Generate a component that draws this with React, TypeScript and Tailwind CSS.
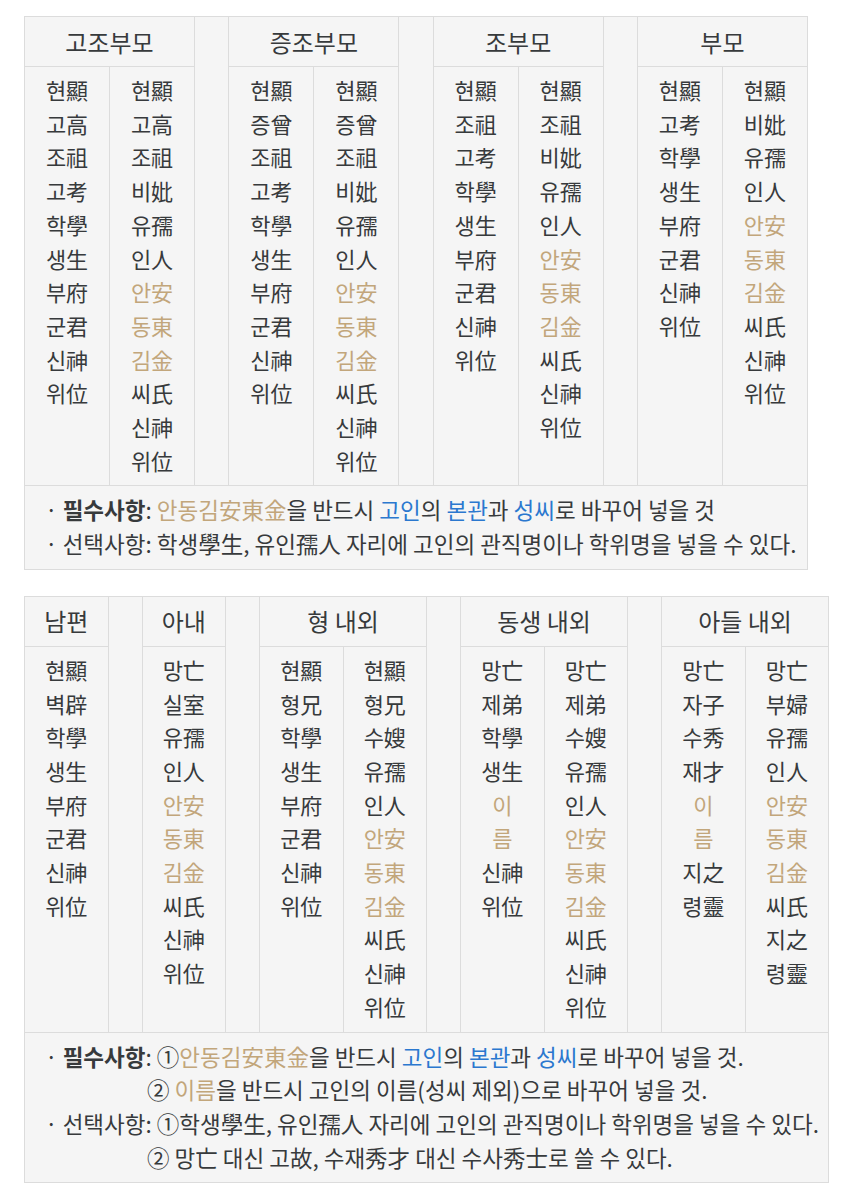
import React from "react";

const GOLD = "text-[#c2a67b]";
const BLUE = "text-[#2b78cf]";

type Group = { title: string; cols: string[][] };

// "*" 로 시작하는 항목은 금색(바꿔 넣을 자리)
const t1: Group[] = [
  {
    title: "고조부모",
    cols: [
      ["현顯", "고高", "조祖", "고考", "학學", "생生", "부府", "군君", "신神", "위位"],
      ["현顯", "고高", "조祖", "비妣", "유孺", "인人", "*안安", "*동東", "*김金", "씨氏", "신神", "위位"],
    ],
  },
  {
    title: "증조부모",
    cols: [
      ["현顯", "증曾", "조祖", "고考", "학學", "생生", "부府", "군君", "신神", "위位"],
      ["현顯", "증曾", "조祖", "비妣", "유孺", "인人", "*안安", "*동東", "*김金", "씨氏", "신神", "위位"],
    ],
  },
  {
    title: "조부모",
    cols: [
      ["현顯", "조祖", "고考", "학學", "생生", "부府", "군君", "신神", "위位"],
      ["현顯", "조祖", "비妣", "유孺", "인人", "*안安", "*동東", "*김金", "씨氏", "신神", "위位"],
    ],
  },
  {
    title: "부모",
    cols: [
      ["현顯", "고考", "학學", "생生", "부府", "군君", "신神", "위位"],
      ["현顯", "비妣", "유孺", "인人", "*안安", "*동東", "*김金", "씨氏", "신神", "위位"],
    ],
  },
];

const t2: Group[] = [
  { title: "남편", cols: [["현顯", "벽辟", "학學", "생生", "부府", "군君", "신神", "위位"]] },
  { title: "아내", cols: [["망亡", "실室", "유孺", "인人", "*안安", "*동東", "*김金", "씨氏", "신神", "위位"]] },
  {
    title: "형 내외",
    cols: [
      ["현顯", "형兄", "학學", "생生", "부府", "군君", "신神", "위位"],
      ["현顯", "형兄", "수嫂", "유孺", "인人", "*안安", "*동東", "*김金", "씨氏", "신神", "위位"],
    ],
  },
  {
    title: "동생 내외",
    cols: [
      ["망亡", "제弟", "학學", "생生", "*이", "*름", "신神", "위位"],
      ["망亡", "제弟", "수嫂", "유孺", "인人", "*안安", "*동東", "*김金", "씨氏", "신神", "위位"],
    ],
  },
  {
    title: "아들 내외",
    cols: [
      ["망亡", "자子", "수秀", "재才", "*이", "*름", "지之", "령靈"],
      ["망亡", "부婦", "유孺", "인人", "*안安", "*동東", "*김金", "씨氏", "지之", "령靈"],
    ],
  },
];

function Column({ items }: { items: string[] }) {
  return (
    <td className="border border-[#dcdcdc] align-top text-center pt-[6px] pb-[8px]">
      {items.map((w, i) =>
        w.startsWith("*") ? (
          <div key={i} className={GOLD}>
            {w.slice(1)}
          </div>
        ) : (
          <div key={i}>{w}</div>
        )
      )}
    </td>
  );
}

function JesaTable({
  groups,
  colW,
  gapW,
  width,
  notes,
}: {
  groups: Group[];
  colW: number;
  gapW: number;
  width: string;
  notes: React.ReactNode;
}) {
  const total = groups.reduce((s, g) => s + g.cols.length, 0) + groups.length - 1;
  return (
    <table className={`${width} table-fixed border-collapse bg-[#f5f5f5] text-[#373a3c] text-[22px] leading-[33.7px]`}>
      <colgroup>
        {groups.map((g, gi) => (
          <React.Fragment key={gi}>
            {gi > 0 && <col style={{ width: gapW }} />}
            {g.cols.map((_, ci) => (
              <col key={ci} style={{ width: colW }} />
            ))}
          </React.Fragment>
        ))}
      </colgroup>
      <tbody>
        <tr className="h-[50px]">
          {groups.map((g, gi) => (
            <React.Fragment key={gi}>
              {gi > 0 && <td rowSpan={2} className="border border-[#dcdcdc]" />}
              <td colSpan={g.cols.length} className="border border-[#dcdcdc] text-center text-[24px]">
                {g.title}
              </td>
            </React.Fragment>
          ))}
        </tr>
        <tr>
          {groups.map((g, gi) => (
            <React.Fragment key={gi}>
              {g.cols.map((c, ci) => (
                <Column key={ci} items={c} />
              ))}
            </React.Fragment>
          ))}
        </tr>
        <tr>
          <td colSpan={total} className="border border-[#dcdcdc] pl-[20px] pt-[7px] pb-[8px] text-[22.5px] whitespace-nowrap">
            {notes}
          </td>
        </tr>
      </tbody>
    </table>
  );
}

export default function App() {
  return (
    <div
      className="min-h-[1198px] bg-white pt-[16px] pl-[24px] flex flex-col gap-[26px]"
      style={{ fontFamily: '"Malgun Gothic", "Noto Sans CJK KR", sans-serif' }}
    >
      {/* 고조부모 ~ 부모 */}
      <JesaTable
        groups={t1}
        colW={85}
        gapW={34.3}
        width="w-[783px]"
        notes={
          <>
            <div>
              · <b>필수사항</b>: <span className={GOLD}>안동김安東金</span>을 반드시{" "}
              <span className={BLUE}>고인</span>의 <span className={BLUE}>본관</span>과{" "}
              <span className={BLUE}>성씨</span>로 바꾸어 넣을 것
            </div>
            <div>· 선택사항: 학생學生, 유인孺人 자리에 고인의 관직명이나 학위명을 넣을 수 있다.</div>
          </>
        }
      />

      {/* 남편 ~ 아들 내외 */}
      <JesaTable
        groups={t2}
        colW={83.5}
        gapW={34}
        width="w-[804px]"
        notes={
          <>
            <div>
              · <b>필수사항</b>: ①<span className={GOLD}>안동김安東金</span>을 반드시{" "}
              <span className={BLUE}>고인</span>의 <span className={BLUE}>본관</span>과{" "}
              <span className={BLUE}>성씨</span>로 바꾸어 넣을 것.
            </div>
            <div className="pl-[102px]">
              ② <span className={GOLD}>이름</span>을 반드시 고인의 이름(성씨 제외)으로 바꾸어 넣을 것.
            </div>
            <div>· 선택사항: ①학생學生, 유인孺人 자리에 고인의 관직명이나 학위명을 넣을 수 있다.</div>
            <div className="pl-[102px]">② 망亡 대신 고故, 수재秀才 대신 수사秀士로 쓸 수 있다.</div>
          </>
        }
      />
    </div>
  );
}
